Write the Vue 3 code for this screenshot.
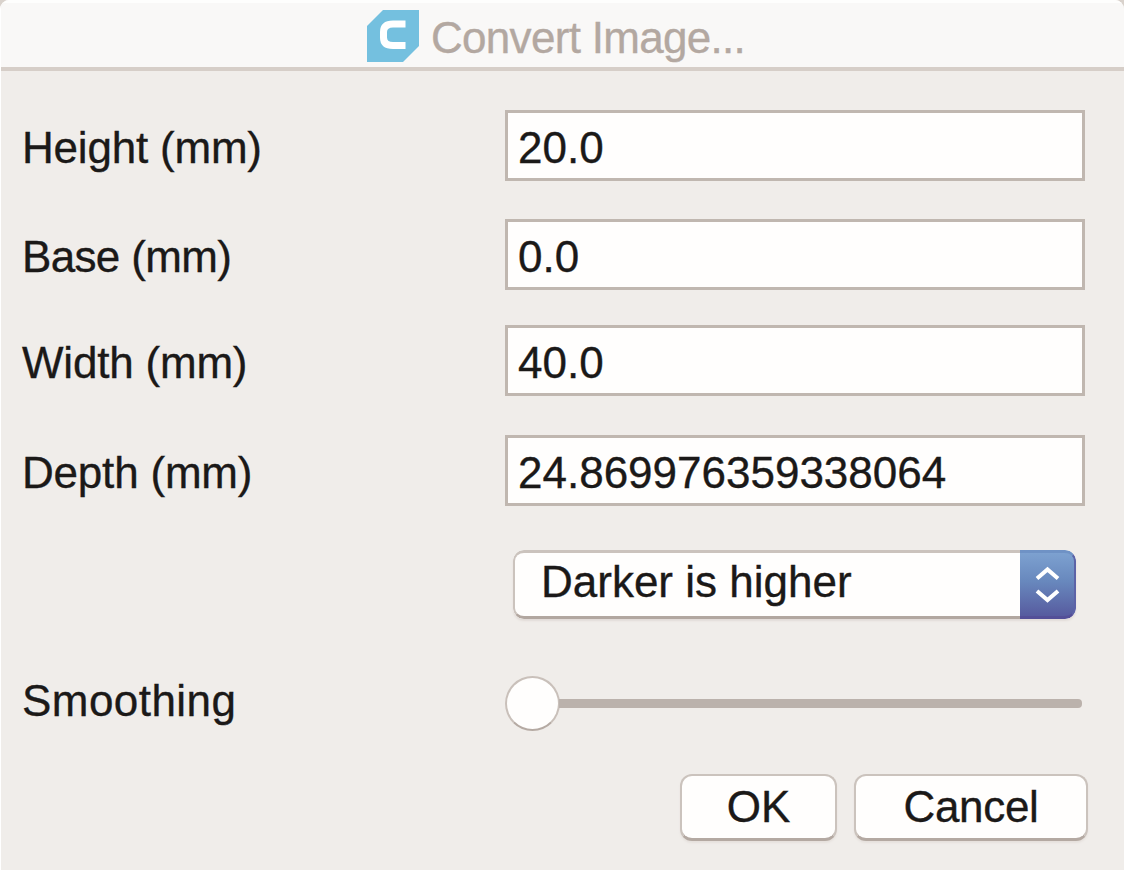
<script setup>
import { ref } from 'vue'

const fields = ref([
  { id: 'height', label: 'Height (mm)', value: '20.0' },
  { id: 'base', label: 'Base (mm)', value: '0.0' },
  { id: 'width', label: 'Width (mm)', value: '40.0' },
  { id: 'depth', label: 'Depth (mm)', value: '24.869976359338064' }
])
</script>

<template>
  <main class="dialog">
    <header class="titlebar">
      <svg class="logo" viewBox="0 0 52 52" aria-hidden="true">
        <path d="M16 0H52V36L36 52H0V16Z" fill="#74c0df" />
        <path d="M38.5 14H26Q16.5 14 16.5 22V27.5Q16.5 35.5 26 35.5H38.5" fill="none" stroke="#fff" stroke-width="7" />
      </svg>
      <h1 class="title">Convert Image...</h1>
    </header>

    <section class="form">
      <div v-for="field in fields" :key="field.id" class="row" :class="field.id">
        <span class="label">{{ field.label }}</span>
        <div class="input"><span class="value">{{ field.value }}</span></div>
      </div>

      <div class="row select-row">
        <div class="select">
          <span class="choice">Darker is higher</span>
          <span class="stepper">
            <svg viewBox="0 0 55 68" aria-hidden="true">
              <path d="M17 28.5L27.5 19.5L38 28.5M17 41L27.5 50L38 41" />
            </svg>
          </span>
        </div>
      </div>

      <div class="row slider-row">
        <span class="label smoothing">Smoothing</span>
        <div class="slider">
          <div class="thumb"></div>
          <div class="track"></div>
        </div>
      </div>
    </section>

    <footer class="actions">
      <button class="button ok">OK</button>
      <button class="button cancel">Cancel</button>
    </footer>
  </main>
</template>

<style>
html,
body {
  margin: 0;
  overflow: hidden;
  background: #d9d2cc;
}
</style>

<style scoped>
* {
  box-sizing: border-box;
}
.dialog {
  width: 1124px;
  height: 870px;
  overflow: hidden;
  border-left: 1px solid #fff;
  border-radius: 9px 9px 0 0;
  background: #f0edea;
  color: #1b1918;
  font-family: "Liberation Sans", Arial, sans-serif;
  font-size: 44px;
  -webkit-text-stroke: 0.35px currentColor;
}
.titlebar {
  display: flex;
  height: 71px;
  padding: 7px 0 0 366px;
  border-top: 3px solid #fefefd;
  border-bottom: 4px solid #d6cec8;
  background: #f9f8f7;
}
.logo {
  width: 52px;
  height: 52px;
  flex: none;
}
.title {
  margin: 2px 0 0 12px;
  color: #b3a8a1;
  font-size: 44px;
  font-weight: 400;
  line-height: 51px;
  letter-spacing: -0.7px;
  white-space: nowrap;
}
.form {
  padding: 39px 0 0 19px;
}
.row {
  display: flex;
  height: 71px;
}
.label {
  width: 485px;
  padding-left: 2px;
  line-height: 75px;
  letter-spacing: -0.2px;
  white-space: nowrap;
}
.input {
  width: 580px;
  height: 71px;
  padding-left: 10px;
  border: 3px solid #c0b7b0;
  background: #fffefd;
  line-height: 69px;
}
.base {
  margin-top: 38px;
}
.base .label {
  letter-spacing: -0.65px;
}
.width {
  margin-top: 35px;
}
.depth {
  margin-top: 39px;
}
.select-row {
  height: 69px;
  margin-top: 44px;
  padding-left: 493px;
}
.select {
  display: flex;
  width: 563px;
  height: 69px;
  overflow: hidden;
  border-radius: 11px;
  background: #fffefd;
  box-shadow: 0 2px 2px #e2dcd8;
}
.choice {
  width: 507px;
  padding-left: 26px;
  border: 3px solid #cbc3bd;
  border-left-width: 2px;
  border-right: 0;
  border-bottom-color: #b2a7a0;
  border-radius: 11px 0 0 11px;
  line-height: 58px;
}
.stepper {
  width: 56px;
  border-top: 3px solid #6f92c5;
  border-right: 2px solid #5c63a7;
  border-bottom: 3px solid #544f98;
  border-radius: 0 11px 11px 0;
  background: linear-gradient(#7da1d0, #6888bd 45%, #575b9f);
}
.stepper svg {
  display: block;
  width: 55px;
  height: 68px;
  margin-top: -3px;
}
.stepper path {
  fill: none;
  stroke: #fff;
  stroke-width: 4;
}
.slider-row {
  height: 55px;
  margin-top: 57px;
}
.smoothing {
  line-height: 50px;
  letter-spacing: 0.45px;
}
.slider {
  display: flex;
  align-items: center;
  width: 577px;
}
.thumb {
  width: 55px;
  height: 55px;
  flex: none;
  border: 2px solid #c9c0ba;
  border-bottom-color: #b5aaa3;
  border-radius: 50%;
  background: #fffefd;
}
.track {
  height: 9px;
  flex: 1;
  margin-left: -1px;
  border-radius: 0 4px 4px 0;
  background: #bbb2ac;
}
.actions {
  display: flex;
  justify-content: flex-end;
  gap: 17px;
  padding: 43px 36px 0 0;
}
.button {
  height: 67px;
  padding: 0;
  border: 2px solid #cbc3bd;
  border-bottom: 3px solid #b4a9a2;
  border-radius: 12px;
  background: #fffefd;
  box-shadow: 0 2px 2px #e6e1dd;
  color: inherit;
  font: inherit;
  line-height: 62px;
  -webkit-text-stroke: inherit;
}
.ok {
  width: 157px;
}
.cancel {
  width: 234px;
  letter-spacing: -0.3px;
}
</style>
